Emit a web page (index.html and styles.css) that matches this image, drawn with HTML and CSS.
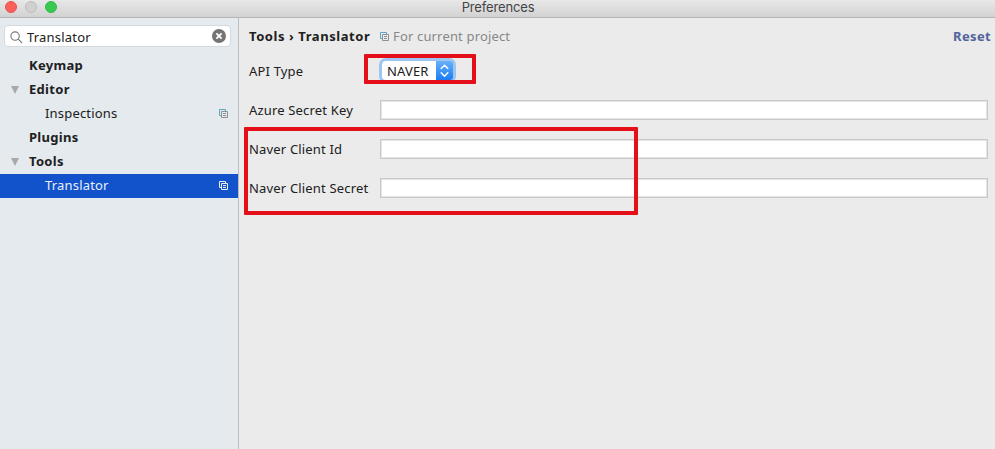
FILE: index.html
```html
<!DOCTYPE html>
<html lang="en">
<head>
<meta charset="utf-8">
<title>Preferences</title>
<link rel="stylesheet" href="styles.css">
</head>
<body>
<svg class="defs" width="0" height="0" aria-hidden="true">
  <symbol id="copy" viewBox="0 0 9 9">
    <path class="back" d="M2 6.500H.5v-6h6V2" fill="none"/>
    <path class="front" d="M2.500 2.500h6v6h-6zM4 4.500h3M4 6.500h3" fill="none" stroke="currentColor"/>
  </symbol>
</svg>
<div class="window">
  <header class="titlebar">
    <div class="lights"><i class="light close"></i><i class="light minimize"></i><i class="light expand"></i></div>
    <span class="title">Preferences</span>
  </header>
  <div class="body">
    <aside class="sidebar">
      <div class="search">
        <svg class="lens" viewBox="0 0 13 13"><circle cx="5.1" cy="5.1" r="4.2"/><path d="M8.2 8.2l4 4"/></svg>
        <span class="query">Translator</span>
        <svg class="clear" viewBox="0 0 14 14"><circle cx="7" cy="7" r="7"/><path d="M4.4 4.4l5.2 5.2M9.6 4.4L4.4 9.6"/></svg>
      </div>
      <nav class="tree">
        <div class="item"><span>Keymap</span></div>
        <div class="item"><i class="arrow"></i><span>Editor</span></div>
        <div class="item child"><span>Inspections</span><svg class="copy"><use href="#copy"/></svg></div>
        <div class="item"><span>Plugins</span></div>
        <div class="item"><i class="arrow"></i><span>Tools</span></div>
        <div class="item child selected"><span>Translator</span><svg class="copy"><use href="#copy"/></svg></div>
      </nav>
    </aside>
    <main class="content">
      <div class="heading">
        <span class="crumbs">Tools › Translator</span>
        <svg class="copy"><use href="#copy"/></svg>
        <span class="scope">For current project</span>
        <a class="reset">Reset</a>
      </div>
      <div class="row type">
        <label>API Type</label>
        <div class="select"><span>NAVER</span><div class="stepper"><svg viewBox="0 0 18 19"><path d="M5.500 7.500L9 4l3.500 3.500M5.500 12L9 15.500l3.500-3.500"/></svg></div></div>
      </div>
      <div class="row"><label>Azure Secret Key</label><div class="field"></div></div>
      <div class="row"><label>Naver Client Id</label><div class="field"></div></div>
      <div class="row"><label>Naver Client Secret</label><div class="field"></div></div>
    </main>
  </div>
  <div class="mark mark-type"></div>
  <div class="mark mark-client"></div>
</div>
</body>
</html>
```
FILE: styles.css
```css
* { box-sizing: border-box; }
body { margin: 0; font: 13px/24px "Noto Sans", sans-serif; color: #202020; }
.defs { position: absolute; }
.window { position: relative; width: 995px; height: 449px; overflow: hidden; display: flex; flex-direction: column; background: #ebebeb; }
.titlebar { height: 18px; display: grid; grid-template-columns: 1fr auto 1fr; flex: none; background: linear-gradient(#e8e8e8, #d2d2d2); border-bottom: 1px solid #b4b4b4; }
.lights { display: flex; gap: 8px; padding: 1px 0 0 5px; }
.light { width: 12px; height: 12px; border-radius: 50%; border: 1px solid; }
.close { background: #fc605b; border-color: #e65350; }
.minimize { background: #d0d0d0; border-color: #bcbcbc; }
.expand { background: #3ac950; border-color: #30b943; }
.title { font: 13px/15px Inter, sans-serif; letter-spacing: -.15px; color: #444; padding-left: 1px; }
.body { display: flex; flex: 1; }
.sidebar { width: 239px; background: #e4eaee; border-right: 1px solid #bdbdbd; padding-top: 7px; }
.search { width: 227px; height: 22px; margin-left: 4px; padding: 0 5px; display: flex; align-items: center; background: #fff; border: 1px solid #d5dade; border-radius: 4px; }
.lens { width: 13px; height: 13px; fill: none; stroke: #777; stroke-width: 1.1; margin-top: 2px; }
.query { flex: 1; margin: 1px 0 0 4px; letter-spacing: .2px; }
.clear { width: 14px; height: 14px; fill: #757575; margin-right: -1px; margin-top: -1px; }
.clear path { stroke: #fff; stroke-width: 1.8; }
.tree { margin-top: 7px; }
.item { height: 24px; display: flex; align-items: center; padding-left: 29px; font-weight: 700; }
.item span { letter-spacing: .3px; margin-top: -2px; }
.arrow { width: 0; margin-left: -18px; margin-right: 9px; border: solid transparent; border-width: 8px 4.5px 0; border-top-color: #a8a8a8; }
.arrow + span { padding-left: 1px; }
.child { padding-left: 45px; padding-right: 10px; font-weight: 400; justify-content: space-between; }
.child span { letter-spacing: .18px; }
.selected { background: #1253cb; color: #e9effb; }
.copy { width: 9px; height: 9px; color: #8f8f8f; flex: none; margin-top: -1px; }
.back { stroke: #5ba5c5; }
.selected .copy { filter: brightness(0) invert(.93); }
.content { flex: 1; padding: 6px 7px 0 10px; }
.heading { height: 24px; display: flex; align-items: center; }
.crumbs { width: 131px; font-weight: 700; letter-spacing: .57px; white-space: nowrap; }
.heading .copy { margin-top: 1px; }
.scope { margin-left: 4px; color: #888; letter-spacing: .16px; }
.reset { margin-left: auto; margin-right: -3px; color: #52639d; font-weight: 700; letter-spacing: .35px; }
.row { height: 39px; display: flex; align-items: center; }
.row label { width: 131px; flex: none; margin-top: 1px; letter-spacing: .17px; }
.type { height: 42px; padding-top: 3px; }
.row.type label { margin-top: 0; }
.field { flex: 1; height: 20px; background: #fff; border: 1px solid #c8c8c8; box-shadow: inset 0 0 0 1px #e5e5e5; }
.select { width: 71px; height: 19px; margin-left: 2px; display: flex; border-radius: 4px; background: #fff; box-shadow: 0 0 0 3px #9cc5f2; }
.select span { width: 54px; padding-left: 5px; line-height: 21px; letter-spacing: .15px; }
.stepper { width: 17px; border-radius: 0 3px 3px 0; background: linear-gradient(#67b1f8, #1c7df5); }
.stepper svg { display: block; width: 17px; height: 19px; fill: none; stroke: #fff; stroke-width: 1.5; stroke-linecap: round; stroke-linejoin: round; }
.mark { position: absolute; border: 4px solid #e40f18; border-radius: 1px; }
.mark-type { left: 364px; top: 54px; width: 112px; height: 30px; }
.mark-client { left: 244px; top: 127px; width: 394px; height: 88px; }
```
